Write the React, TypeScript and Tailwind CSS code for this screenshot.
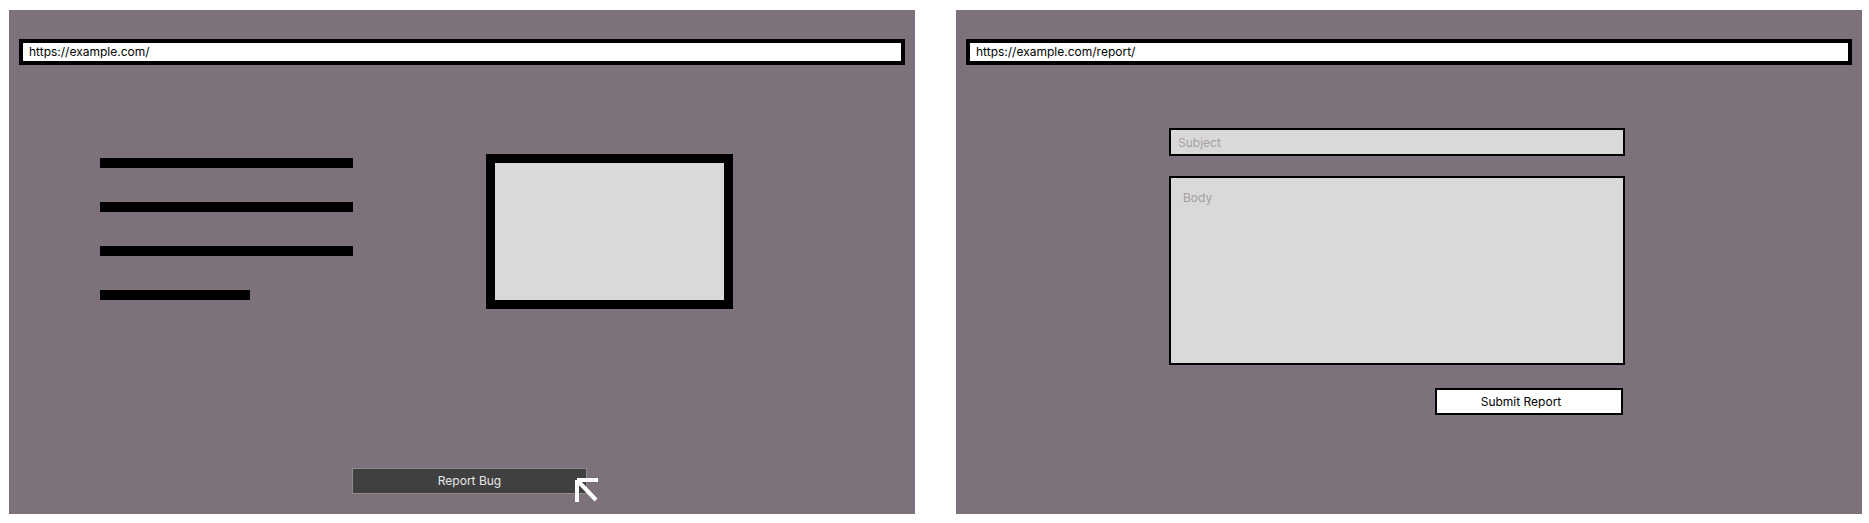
import React from 'react';

const UrlBar: React.FC<{ url: string }> = ({ url }) => (
  <div className="mx-[10px] mt-[29px] h-[26px] border-4 border-black bg-white px-[6px] flex items-center text-[12px] text-black leading-none">
    {url}
  </div>
);

const Cursor = () => (
  <svg width="24" height="26" viewBox="0 0 24 26" className="absolute left-[566px] top-[468px]">
    <path d="M2 2H23M2 2V24M2 2L21 22" stroke="#ffffff" strokeWidth="4" fill="none" />
  </svg>
);

const HomePage = () => (
  <div className="relative flex flex-col w-[906px] h-[504px] bg-[#7d727b]">
    <UrlBar url="https://example.com/" />
    <div className="mt-[89px] flex items-start">
      <div className="ml-[91px] mt-[4px] flex flex-col gap-[34px] w-[253px]">
        <div className="h-[10px] w-full bg-black" />
        <div className="h-[10px] w-full bg-black" />
        <div className="h-[10px] w-full bg-black" />
        <div className="h-[10px] w-[150px] bg-black" />
      </div>
      <div className="ml-[133px] w-[247px] h-[155px] border-[9px] border-black bg-[#d9d9d9]" />
    </div>
    <button className="mt-[159px] ml-[343px] w-[235px] h-[26px] bg-[#404040] border border-[#8c8c8c] text-[12px] text-[#e8e8e8] flex items-center justify-center">
      Report Bug
    </button>
    <Cursor />
  </div>
);

const ReportPage = () => (
  <div className="flex flex-col w-[906px] h-[504px] bg-[#7d727b]">
    <UrlBar url="https://example.com/report/" />
    <div className="ml-[213px] w-[456px] flex flex-col">
      <div className="mt-[63px] h-[28px] border-2 border-black bg-[#d9d9d9] px-[7px] pt-[1px] flex items-center text-[12px] text-[#a79ea5]">
        Subject
      </div>
      <div className="mt-[20px] h-[189px] border-2 border-black bg-[#d9d9d9] px-[12px] pt-[12px] text-[12px] text-[#a79ea5] leading-[16px]">
        Body
      </div>
      <button className="mt-[23px] mr-[2px] self-end w-[188px] h-[27px] border-2 border-black bg-white pr-[16px] text-[12px] text-black flex items-center justify-center">
        Submit Report
      </button>
    </div>
  </div>
);

export default function App() {
  return (
    <div className="w-[1869px] h-[523px] bg-white flex gap-[41px] pt-[10px] pl-[9px] font-['Inter',sans-serif]">
      <HomePage />
      <ReportPage />
    </div>
  );
}
